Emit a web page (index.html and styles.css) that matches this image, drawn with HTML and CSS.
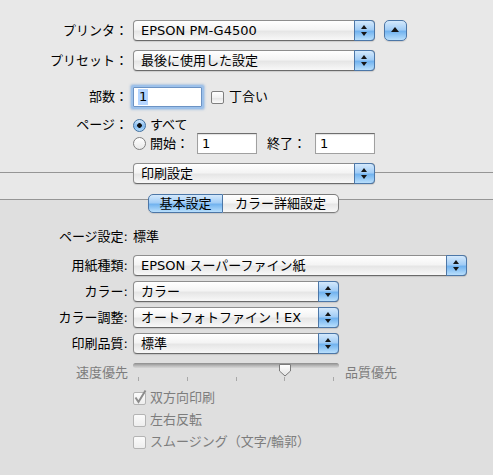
FILE: index.html
```html
<!DOCTYPE html>
<html lang="ja">
<head>
    <meta charset="UTF-8">
    <title>プリント</title>
    <link rel="stylesheet" href="styles.css">
</head>
<body>
    <div class="top">
        <div class="row printer-row">
            <span class="label">プリンタ：</span>
            <div class="popup w-wide"><span class="value">EPSON PM-G4500</span><span class="stepper"></span></div>
            <span class="disclose"></span>
        </div>
        <div class="row preset-row">
            <span class="label">プリセット：</span>
            <div class="popup w-wide"><span class="value">最後に使用した設定</span><span class="stepper"></span></div>
        </div>
        <div class="row copies-row">
            <span class="label">部数：</span>
            <div class="field focus w-copies"><span class="sel">1</span></div>
            <span class="check collate"></span>
            <span class="check-text">丁合い</span>
        </div>
        <div class="row pages-row">
            <span class="label">ページ：</span>
            <span class="radio on"></span>
            <span class="radio-text">すべて</span>
        </div>
        <div class="row range-row">
            <span class="label"></span>
            <span class="radio"></span>
            <span class="radio-text start-text">開始：</span>
            <div class="field w-page">1</div>
            <span class="to-text">終了：</span>
            <div class="field w-page">1</div>
        </div>
        <div class="row panel-row">
            <span class="line line-left"></span>
            <div class="popup w-wide"><span class="value">印刷設定</span><span class="stepper"></span></div>
            <span class="line line-right"></span>
        </div>
        <div class="row tab-row">
            <span class="line tab-line-left"></span>
            <div class="tabs">
                <span class="tab active">基本設定</span>
                <span class="tab">カラー詳細設定</span>
            </div>
            <span class="line tab-line-right"></span>
        </div>
    </div>

    <div class="bottom">
        <div class="row page-setup-row">
            <span class="label">ページ設定:</span>
            <span class="plain">標準</span>
        </div>
        <div class="row media-row">
            <span class="label">用紙種類:</span>
            <div class="popup w-full"><span class="value">EPSON スーパーファイン紙</span><span class="stepper"></span></div>
        </div>
        <div class="row setting-row">
            <span class="label">カラー:</span>
            <div class="popup w-mid"><span class="value">カラー</span><span class="stepper"></span></div>
        </div>
        <div class="row setting-row">
            <span class="label">カラー調整:</span>
            <div class="popup w-mid"><span class="value">オートフォトファイン！EX</span><span class="stepper"></span></div>
        </div>
        <div class="row setting-row">
            <span class="label">印刷品質:</span>
            <div class="popup w-mid"><span class="value">標準</span><span class="stepper"></span></div>
        </div>
        <div class="row slider-row">
            <span class="label dim slider-label">速度優先</span>
            <div class="slider">
                <div class="track"></div>
                <svg class="thumb" width="14" height="13" viewBox="0 0 14 13">
                    <defs>
                        <linearGradient id="thumbFill" x1="0" y1="0" x2="0" y2="1">
                            <stop offset="0" stop-color="#ffffff"/>
                            <stop offset="1" stop-color="#e2e2e2"/>
                        </linearGradient>
                    </defs>
                    <path d="M1.5 0.5 H12.5 V7 L7 12 L1.5 7 Z" fill="url(#thumbFill)" stroke="#7a7a7a" stroke-width="1"/>
                </svg>
                <div class="ticks"><i></i><i></i><i></i><i></i><i></i></div>
            </div>
            <span class="dim slider-end">品質優先</span>
        </div>
        <div class="opt first-opt">
            <span class="check off">
                <svg class="tick-mark" width="15" height="15" viewBox="0 0 15 15">
                    <path d="M2.5 7.5 L5.5 12 L12.5 0.5" fill="none" stroke="#8c8c8c" stroke-width="2"/>
                </svg>
            </span>
            <span class="opt-text dim">双方向印刷</span>
        </div>
        <div class="opt">
            <span class="check off"></span>
            <span class="opt-text dim">左右反転</span>
        </div>
        <div class="opt">
            <span class="check off"></span>
            <span class="opt-text dim">スムージング（文字/輪郭）</span>
        </div>
    </div>
</body>
</html>
```

FILE: styles.css
```css
* {
    box-sizing: border-box;
}
body {
    margin: 0;
    background-color: #dfdfdf;
    font-family: "DejaVu Sans", "Noto Sans CJK JP", sans-serif;
    font-size: 13px;
    line-height: 16px;
    color: #000;
}
.top {
    background-color: #e8e8e8;
    padding-top: 20px;
}
.row {
    display: flex;
    align-items: center;
}
.label {
    width: 128px;
    margin-right: 5px;
    flex-shrink: 0;
    text-align: right;
    white-space: nowrap;
}
.dim {
    color: #7d7d7d;
}

/* popup buttons */
.popup {
    display: flex;
    align-items: center;
    height: 21px;
    padding-left: 7px;
    border: 1px solid #8e8e8e;
    border-bottom-color: #6a6a6a;
    border-radius: 4px;
    background: linear-gradient(#ffffff, #f4f4f4 45%, #e6e6e6 55%, #f8f8f8);
    box-shadow: 0 1px 1px rgba(0, 0, 0, 0.12);
    white-space: nowrap;
}
.popup .value {
    flex: 1;
}
.stepper {
    position: relative;
    align-self: stretch;
    width: 21px;
    margin: -1px -1px -1px 0;
    border: 1px solid #4c77a8;
    border-radius: 0 4px 4px 0;
    background: linear-gradient(#d4e9fc, #a2cdf6 45%, #72b3ef 55%, #b9dffc);
}
.stepper::before,
.stepper::after {
    content: "";
    position: absolute;
    left: 6px;
    border-left: 3px solid transparent;
    border-right: 3px solid transparent;
}
.stepper::before {
    top: 4px;
    border-bottom: 4px solid #151515;
}
.stepper::after {
    bottom: 4px;
    border-top: 4px solid #151515;
}
.w-wide {
    width: 242px;
}
.w-full {
    width: 334px;
}
.w-mid {
    width: 206px;
}
.disclose {
    position: relative;
    width: 23px;
    height: 21px;
    margin-left: 9px;
    border: 1px solid #4c76a6;
    border-radius: 5px;
    background: linear-gradient(#d4e9fc, #a2cdf6 45%, #72b3ef 55%, #b9dffc);
    box-shadow: 0 1px 1px rgba(0, 0, 0, 0.12);
}
.disclose::after {
    content: "";
    position: absolute;
    left: 6px;
    top: 6px;
    border-left: 4px solid transparent;
    border-right: 4px solid transparent;
    border-bottom: 5px solid #151515;
}

/* text fields */
.field {
    display: flex;
    align-items: center;
    height: 21px;
    padding-left: 4px;
    border: 1px solid #a0a0a0;
    border-top-color: #6e6e6e;
    background-color: #fff;
    box-shadow: inset 0 1px 1px rgba(0, 0, 0, 0.12);
}
.field.focus {
    height: 20px;
    border-color: #6c93c4;
    border-radius: 1px;
    box-shadow: 0 0 0 2px #9dc1ea, 0 0 2px 3px rgba(120, 165, 220, 0.5);
}
.field .sel {
    padding: 0 1px;
    background-color: #b5d5ff;
}
.w-copies {
    width: 69px;
}
.w-page {
    width: 60px;
    flex-shrink: 0;
}

/* checkboxes and radios */
.check {
    position: relative;
    width: 13px;
    height: 13px;
    flex-shrink: 0;
    border: 1px solid #7f7f7f;
    border-radius: 2px;
    background: linear-gradient(#ffffff, #f1f1f1 50%, #e4e4e4 55%, #fbfbfb);
}
.check.off {
    border-color: #b4b4b4;
    background: linear-gradient(#fbfbfb, #eeeeee);
}
.tick-mark {
    position: absolute;
    left: -1px;
    top: -3px;
}
.collate {
    margin-left: 9px;
}
.check-text {
    margin-left: 5px;
}
.radio {
    width: 13px;
    height: 13px;
    flex-shrink: 0;
    border: 1px solid #7f7f7f;
    border-radius: 50%;
    background: linear-gradient(#ffffff, #e9e9e9);
}
.radio.on {
    border-color: #41709f;
    background: radial-gradient(circle, #111 0, #111 2px, transparent 2.6px),
        linear-gradient(#d2e8fc, #84bbf0 55%, #b0dafb);
}
.radio-text {
    margin-left: 4px;
    white-space: nowrap;
}

/* top rows */
.preset-row {
    margin-top: 9px;
}
.copies-row {
    margin-top: 16px;
}
.pages-row {
    height: 14px;
    margin-top: 11px;
}
.range-row {
    margin-top: 1px;
}
.start-text {
    width: 43px;
    margin-right: 4px;
}
.to-text {
    width: 40px;
    margin-left: 10px;
    margin-right: 8px;
    white-space: nowrap;
}
.line {
    height: 1px;
    background-color: #959595;
}
.panel-row {
    align-items: flex-start;
    margin-top: 9px;
}
.line-left {
    width: 133px;
    margin-top: 9px;
}
.line-right {
    flex: 1;
    margin-top: 9px;
}

/* tabs */
.tab-row {
    align-items: flex-start;
    margin-top: 10px;
    background: linear-gradient(#e8e8e8 5px, #dfdfdf 5px);
}
.tab-line-left {
    width: 148px;
    margin-top: 5px;
}
.tab-line-right {
    flex: 1;
    margin-top: 5px;
}
.tabs {
    display: flex;
    height: 19px;
    box-shadow: 0 1px 1px rgba(0, 0, 0, 0.1);
    border-radius: 5px;
}
.tab {
    display: flex;
    align-items: center;
    justify-content: center;
    width: 116px;
    border: 1px solid #7c7c7c;
    border-left: none;
    border-radius: 0 5px 5px 0;
    background: linear-gradient(#ffffff, #f4f4f4 45%, #e6e6e6 55%, #f8f8f8);
    white-space: nowrap;
}
.tab.active {
    width: 75px;
    border: 1px solid #4c76a6;
    border-radius: 5px 0 0 5px;
    background: linear-gradient(#d4e9fc, #a2cdf6 45%, #72b3ef 55%, #b9dffc);
}

/* lower panel */
.page-setup-row {
    margin-top: 16px;
}
.media-row {
    margin-top: 10px;
}
.setting-row {
    margin-top: 5px;
}
.slider-row {
    align-items: flex-start;
    margin-top: 8px;
}
.slider-label {
    margin-top: 3px;
}
.slider {
    position: relative;
    width: 206px;
}
.track {
    height: 5px;
    margin-top: 1px;
    border-radius: 3px;
    background: linear-gradient(#8d8d8d, #bdbdbd 60%, #d6d6d6);
}
.thumb {
    position: absolute;
    left: 145px;
    top: 2px;
}
.ticks {
    display: flex;
    justify-content: space-between;
    height: 4px;
    margin-top: 9px;
    padding: 0 5px;
}
.ticks i {
    width: 1px;
    background-color: #a8a8a8;
}
.slider-end {
    margin-top: 3px;
    margin-left: 6px;
}
.opt {
    display: flex;
    align-items: center;
    height: 22px;
    padding-left: 133px;
}
.first-opt {
    margin-top: 6px;
}
.opt-text {
    margin-left: 4px;
}
```
